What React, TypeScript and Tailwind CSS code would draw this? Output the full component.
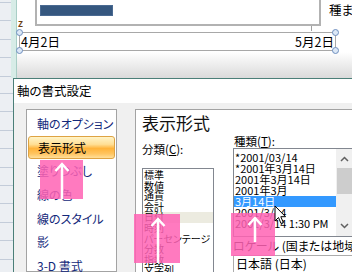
import React from "react";

function Strip({ first, count, className }: { first: string; count: number; className: string }) {
  const rows = Array.from({ length: count }, (_, i) => i);
  return (
    <div className={"flex flex-col overflow-hidden shrink-0 bg-[#eceff3] " + className}>
      <div className={"shrink-0 border-b border-[#c3ccd9] " + first} />
      {rows.map((i) => (
        <div key={i} className="h-[18.4px] shrink-0 border-b border-[#c3ccd9]" />
      ))}
    </div>
  );
}

function Handle({ className }: { className: string }) {
  return (
    <div
      className={
        "absolute w-[7px] h-[7px] rounded-full bg-[#dce8f6] border border-[#6f8fbf] " + className
      }
    />
  );
}

function UpArrow({ className, h }: { className: string; h: number }) {
  return (
    <svg className={"absolute " + className} width="16" height={h} viewBox={`0 0 16 ${h}`}>
      <path d={`M8 2 L8 ${h}`} stroke="white" strokeWidth="2.5" fill="none" />
      <path d="M1.5 9 L8 2 L14.5 9" stroke="white" strokeWidth="2.5" fill="none" strokeLinejoin="miter" />
    </svg>
  );
}

const navItems = ["軸のオプション", "表示形式", "塗りつぶし", "線の色", "線のスタイル", "影", "3-D 書式"];
const categories = ["標準", "数値", "通貨", "会計", "日付", "時刻", "パーセンテージ", "分数", "指数", "文字列"];
const types = [
  "*2001/03/14",
  "*2001年3月14日",
  "2001年3月14日",
  "2001年3月",
  "3月14日",
  "2001/3/14",
  "2001/3/14 1:30 PM",
];

export default function App() {
  return (
    <div className="relative w-[352px] h-[272px] overflow-hidden bg-white flex flex-col font-['Noto_Sans_CJK_JP',sans-serif] [font-feature-settings:'palt'] text-black">
      {/* top: sheet + chart */}
      <div className="h-[78px] flex shrink-0">
        <Strip first="h-[3px]" count={5} className="w-[11px]" />
        <div className="w-[6px] shrink-0 bg-[#d7ece7] border-r border-[#a9cec6]" />
        <div className="relative flex-1 bg-white">
          <div className="absolute left-0 right-0 bottom-0 h-[26px] bg-gradient-to-b from-white to-[#dadada]" />
          <div className="absolute left-[18px] top-[-2px] w-[286px] h-[28px] border-l-2 border-r-2 border-b-2 border-[#b2b2b2]" />
          <div className="absolute left-[23px] top-[5px] w-[73px] h-[11px] bg-[#35577f] border border-[#4a6a92]" />
          <div className="absolute left-[294px] top-[26px] w-px h-[5px] bg-[#a0a0a0]" />
          <div className="absolute left-[312px] top-[1px] text-[12.5px] leading-[18px] whitespace-nowrap">種ま</div>
          <div className="absolute left-[1px] top-[19px] text-[8px] leading-[9px] font-bold text-[#6b3d10]">Z</div>
          <div className="absolute left-[2px] top-[32px] right-[16px] h-[19px] border border-[#a8a8a8] flex items-center justify-between px-[1px] text-[12.5px] leading-[16px]">
            <span>4月2日</span>
            <span>5月2日</span>
          </div>
          <Handle className="left-[-1px] top-[29px]" />
          <Handle className="left-[-1px] top-[47px]" />
          <Handle className="right-[13px] top-[29px]" />
          <Handle className="right-[13px] top-[47px]" />
        </div>
      </div>

      {/* bottom: sheet + dialog */}
      <div className="flex-1 flex min-h-0">
        <Strip first="h-[16px]" count={11} className="w-[13px]" />
        <div className="flex-1 flex flex-col border-l border-t border-[#4b7f78] min-w-0">
          <div className="h-[24px] shrink-0 bg-white flex items-center pl-[3px] text-[12.5px]">
            軸の書式設定
          </div>
          <div className="flex-1 bg-[#f0f0f0] pt-[6px] flex min-h-0">
            {/* nav */}
            <div className="ml-[12px] w-[91px] shrink-0 bg-white border border-[#a3a3a3] pt-[2px] flex flex-col">
              {navItems.map((t) =>
                t === "表示形式" ? (
                  <div
                    key={t}
                    className="h-[23.7px] shrink-0 mx-[1px] pl-[9px] flex items-center text-[12px] text-black rounded-[3px] border border-[#dea343] bg-[linear-gradient(to_bottom,#fff4c8_0%,#ffdf95_35%,#ffb33a_55%,#ffc561_80%,#ffdf9a_100%)]"
                  >
                    {t}
                  </div>
                ) : (
                  <div
                    key={t}
                    className="h-[23.7px] shrink-0 pl-[10px] flex items-center text-[12px] text-[#13287a]"
                  >
                    {t}
                  </div>
                )
              )}
            </div>
            {/* right panel */}
            <div className="ml-[18px] flex-1 bg-white border-l border-t border-[#a3a3a3] pl-[6px] pt-[3px] flex flex-col min-w-0">
              <div className="text-[17px] leading-[20px] text-[#111]">表示形式</div>
              <div className="flex">
                <div className="w-[72px] shrink-0 flex flex-col">
                  <div className="mt-[9px] text-[11.5px] leading-[14px]">
                    分類(<span className="underline">C</span>):
                  </div>
                  <div className="mt-[12px] h-[110px] border border-[#828790] pt-[1px] flex flex-col">
                    {categories.map((c) => (
                      <div
                        key={c}
                        className={
                          "h-[10.6px] shrink-0 pl-[1px] text-[10px] leading-[10.6px] whitespace-nowrap " +
                          (c === "日付" ? "bg-[#ecebe0]" : "")
                        }
                      >
                        {c}
                      </div>
                    ))}
                  </div>
                </div>
                <div className="ml-[19px] w-[121px] shrink-0 flex flex-col">
                  <div className="mt-[1px] pl-[1px] text-[11.5px] leading-[14px]">
                    種類(<span className="underline">T</span>):
                  </div>
                  <div className="h-[89px] border border-[#828790] flex">
                    <div className="flex-1 pt-[3px] flex flex-col min-w-0">
                      {types.map((t) => (
                        <div
                          key={t}
                          className={
                            "h-[11px] shrink-0 pl-[1px] text-[11px] leading-[11px] whitespace-nowrap " +
                            (t === "3月14日" ? "bg-[#3399ff] text-white" : "")
                          }
                        >
                          {t}
                        </div>
                      ))}
                    </div>
                    <div className="w-[17px] shrink-0 bg-[#f0f0f0] flex flex-col items-center">
                      <svg width="9" height="6" viewBox="0 0 9 6" className="mt-[7px]">
                        <path d="M1 5 L4.5 1.5 L8 5" stroke="#606060" strokeWidth="1.5" fill="none" />
                      </svg>
                      <div className="mt-[6px] w-[15px] h-[26px] bg-[#cdcdcd]" />
                      <div className="flex-1" />
                      <svg width="9" height="6" viewBox="0 0 9 6" className="mb-[7px]">
                        <path d="M1 1 L4.5 4.5 L8 1" stroke="#606060" strokeWidth="1.5" fill="none" />
                      </svg>
                    </div>
                  </div>
                  <div className="mt-[1px] text-[12px] leading-[16px] whitespace-nowrap">
                    ロケール (国または地域)(<span className="underline">L</span>):
                  </div>
                  <div className="mt-[1px] h-[20px] border border-[#acacac] pl-[2px] text-[12px] leading-[16px] whitespace-nowrap">
                    日本語 (日本)
                  </div>
                </div>
              </div>
            </div>
          </div>
        </div>
      </div>

      {/* annotation overlays */}
      <div className="absolute left-[40px] top-[160px] w-[43px] h-[39px] bg-[#ff63b4]/85" />
      <UpArrow className="left-[54px] top-[162px]" h={37} />
      <div className="absolute left-[134px] top-[214px] w-[46px] h-[49px] bg-[#ff63b4]/85" />
      <UpArrow className="left-[150px] top-[217px]" h={46} />
      <div className="absolute left-[231px] top-[213px] w-[44px] h-[43px] bg-[#ff63b4]/85" />
      <UpArrow className="left-[247px] top-[216px]" h={26} />

      {/* mouse cursor */}
      <svg className="absolute left-[274px] top-[205px]" width="13" height="20" viewBox="0 0 13 20">
        <path
          d="M1 1 L1 16 L4.5 12.5 L7 18.5 L9.3 17.5 L6.8 11.7 L11.5 11.7 Z"
          fill="white"
          stroke="black"
          strokeWidth="1"
          strokeLinejoin="round"
        />
      </svg>
    </div>
  );
}
